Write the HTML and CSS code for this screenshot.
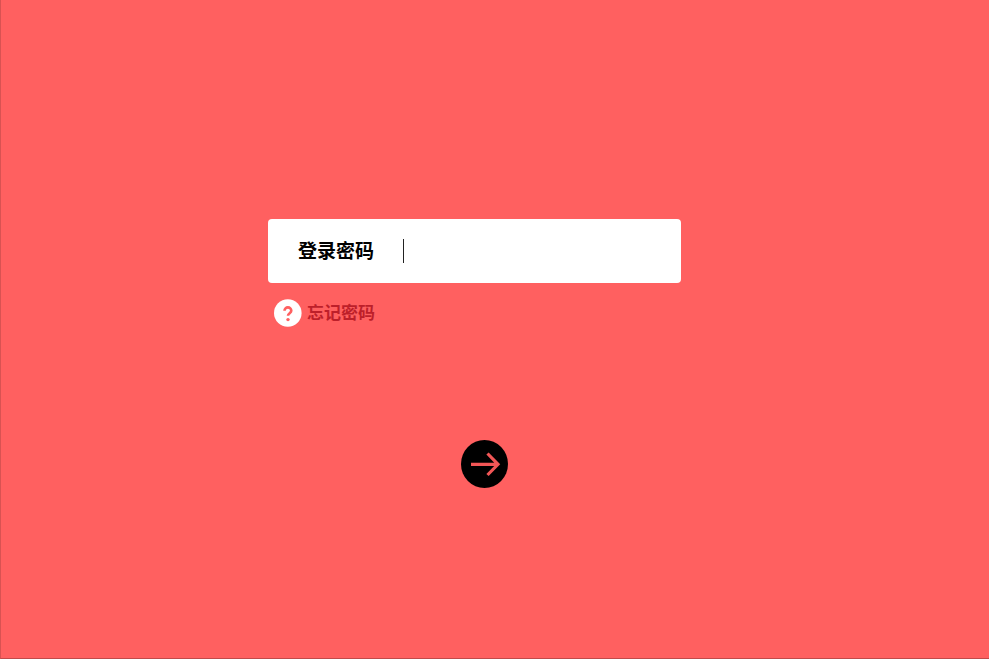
FILE: index.html
```html
<!DOCTYPE html>
<html lang="zh-CN">
<head>
<meta charset="utf-8">
<title>登录</title>
<link rel="stylesheet" href="styles.css">
</head>
<body>
<main class="page">
  <section class="login">
    <div class="card">
      <span class="label">登录密码</span>
      <span class="divider"></span>
    </div>
    <a class="forgot">
      <svg class="help" viewBox="0 0 28 28" aria-hidden="true">
        <circle cx="13.8" cy="14" r="13.8" fill="#fff"/>
        <path d="M10.5 11.8a3.4 3.4 0 0 1 6.8 0c0 2.3-3.3 2.6-3.3 5" fill="none" stroke="#ff6060" stroke-width="2.6"/>
        <circle cx="14" cy="20.6" r="1.7" fill="#ff6060"/>
      </svg>
      <span class="forgot-text">忘记密码</span>
    </a>
  </section>
  <button class="next" aria-label="下一步">
    <svg viewBox="0 0 47 48" aria-hidden="true">
      <ellipse cx="23.5" cy="24" rx="23.5" ry="24" fill="#000"/>
      <path d="M10 24.3h27M26.5 13.5 37 24.3 26.5 35" fill="none" stroke="#f25656" stroke-width="3.2"/>
    </svg>
  </button>
</main>
</body>
</html>
```
FILE: styles.css
```css
* { box-sizing: border-box; }
html, body { margin: 0; height: 100%; }
body { background: #ff6060; font-family: "Liberation Sans", "Noto Sans CJK SC", sans-serif; }
.page {
  height: 659px;
  display: flex;
  flex-direction: column;
  padding: 219px 0 0 267px;
  border-left: 1px solid #d95252;
  border-bottom: 1px solid #c04a4a;
}
.login { width: 413px; }
.card {
  height: 64px;
  background: #fff;
  border-radius: 4px;
  display: flex;
  align-items: center;
  padding-left: 30px;
}
.label { width: 105px; margin-top: 2px; font-size: 19px; font-weight: 700; color: #000; line-height: 62px; }
.divider { width: 1px; height: 24px; background: #222; }
.forgot {
  display: flex;
  align-items: center;
  gap: 5px;
  margin: 16px 0 0 6px;
  height: 28px;
}
.help { width: 28px; height: 28px; flex: none; }
.forgot-text { margin-bottom: 3px; font-size: 17px; font-weight: 700; color: #bd1f2a; }
.next {
  width: 47px;
  height: 48px;
  padding: 0;
  border: 0;
  background: none;
  margin: 113px 0 0 193px;
}
.next svg { display: block; width: 47px; height: 48px; }
```
